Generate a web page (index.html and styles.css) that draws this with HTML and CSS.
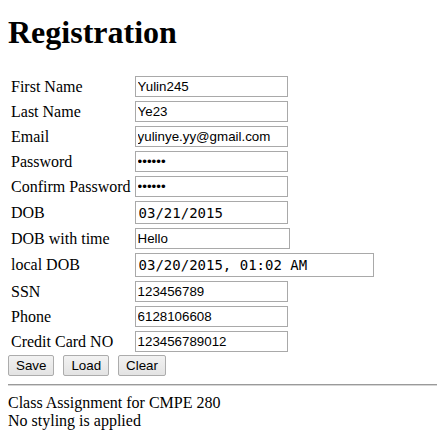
FILE: index.html
```html
<!DOCTYPE html>
<html>
<head>
<meta charset="utf-8">
<title>Registration</title>
<link rel="stylesheet" href="styles.css">
</head>
<body>
<h1 class="title">Registration</h1>
<form class="reg-form">
  <table class="fields">
    <tr><td class="label">First Name</td><td><input class="field" type="text" value="Yulin245"></td></tr>
    <tr><td class="label">Last Name</td><td><input class="field" type="text" value="Ye23"></td></tr>
    <tr><td class="label">Email</td><td><input class="field" type="text" value="yulinye.yy@gmail.com"></td></tr>
    <tr><td class="label">Password</td><td><input class="field" type="password" value="123456"></td></tr>
    <tr><td class="label">Confirm Password</td><td><input class="field" type="password" value="123456"></td></tr>
    <tr><td class="label">DOB</td><td><input class="field date" type="text" value="03/21/2015"></td></tr>
    <tr><td class="label">DOB with time</td><td><input class="field wide" type="text" value="Hello"></td></tr>
    <tr><td class="label">local DOB</td><td><input class="field date local" type="text" value="03/20/2015, 01:02 AM"></td></tr>
    <tr><td class="label">SSN</td><td><input class="field" type="text" value="123456789"></td></tr>
    <tr><td class="label">Phone</td><td><input class="field" type="text" value="6128106608"></td></tr>
    <tr><td class="label">Credit Card NO</td><td><input class="field" type="text" value="123456789012"></td></tr>
  </table>
  <div class="actions">
    <button class="btn" type="button">Save</button>
    <button class="btn" type="button">Load</button>
    <button class="btn" type="button">Clear</button>
  </div>
</form>
<hr class="rule">
<div class="footer">Class Assignment for CMPE 280<br>No styling is applied</div>
</body>
</html>
```
FILE: styles.css
```css
html, body {
  background: #ffffff;
}
body {
  margin: 0 8px 8px;
  padding: 0;
  font-family: "Liberation Serif", "Times New Roman", serif;
  font-size: 16px;
  color: #000;
}
.title {
  font-size: 32px;
  font-weight: bold;
  margin: 14px 0 22px;
}
.reg-form {
  margin: 0;
}
.fields {
  border-collapse: separate;
  border-spacing: 2px;
}
.fields td {
  padding: 1px;
  vertical-align: middle;
}
.label {
  white-space: nowrap;
}
.field {
  box-sizing: border-box;
  width: 153px;
  height: 21px;
  margin: 0;
  padding: 1px 2px;
  border: 1px solid #a9a9a9;
  font-family: "Liberation Sans", Arial, sans-serif;
  font-size: 13.33px;
  color: #000;
  background: #fff;
  display: block;
}
.field.wide {
  width: 155px;
}
.field.date {
  height: 23px;
  padding-left: 3px;
  font-family: "DejaVu Sans Mono", monospace;
  font-size: 14px;
}
.field.local {
  width: 239px;
  height: 24px;
}
.actions {
  display: flex;
  gap: 9px;
}
.btn {
  box-sizing: border-box;
  height: 21px;
  margin: 0;
  padding: 0 7px;
  border: 1px solid #acacac;
  border-radius: 2px;
  background: linear-gradient(#f2f2f2, #e3e3e3);
  font-family: "Liberation Sans", Arial, sans-serif;
  font-size: 13.33px;
  color: #000;
}
.rule {
  width: calc(100% + 8px);
  margin: 8px 0;
  border: 0;
  border-top: 1px solid #9a9a9a;
  border-bottom: 1px solid #d6d6d6;
  height: 0;
}
.footer {
  line-height: 18px;
}
```
